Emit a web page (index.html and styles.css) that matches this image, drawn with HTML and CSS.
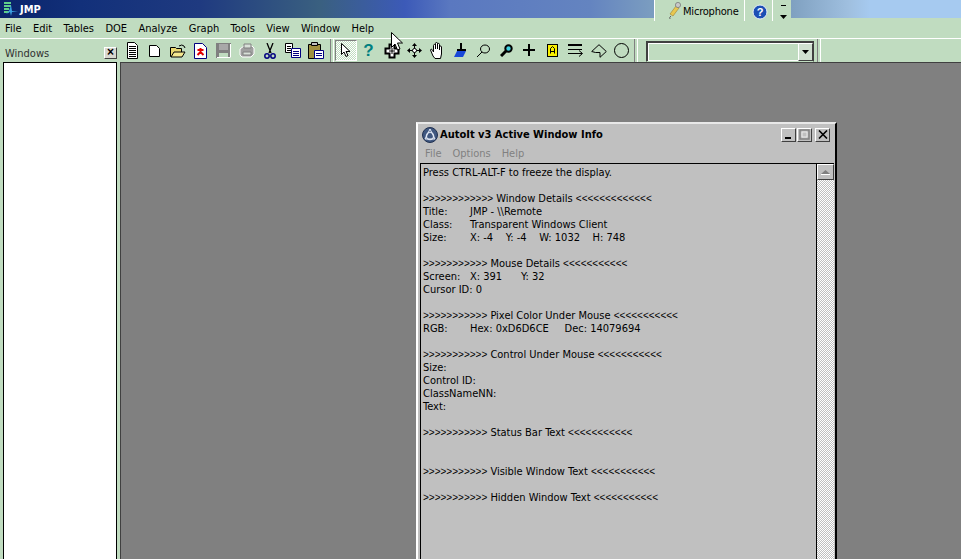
FILE: index.html
```html
<!DOCTYPE html>
<html lang="en">
<head>
<meta charset="utf-8">
<title>JMP</title>
<link rel="stylesheet" href="styles.css">
</head>
<body>
<header class="titlebar">
  <svg class="app-icon" width="16" height="16" viewBox="0 0 16 16"><path d="M1 1h7v2H1zM1 4h7v2H1zM1 7h5v2H1zM1 10h5v2H1z" fill="#5fd08a"/><path d="M3 13l3-3 2-6 1 6h6l-6 1-1 4-1-4z" fill="#39a0e0"/></svg>
  <span class="app-name">JMP</span>
</header>
<div class="langbar">
  <span class="lang-sep"></span>
  <svg class="mic" width="16" height="18" viewBox="0 0 16 18"><path d="M3 13L9 5l3 2-6 8z" fill="#e8c850" stroke="#a08030" stroke-width=".6"/><circle cx="11" cy="4" r="2.600" fill="#c8c8c8" stroke="#707070" stroke-width=".7"/><path d="M4 15q-2 1-1 3" stroke="#606060" fill="none"/></svg>
  <span class="lang-label">Microphone</span>
  <span class="lang-sep"></span>
  <svg class="lang-help" width="16" height="16" viewBox="0 0 16 16"><circle cx="8" cy="8" r="7" fill="#1c4fb4" stroke="#e8f0f8"/><text x="8" y="12" text-anchor="middle" class="help-q">?</text></svg>
  <span class="lang-sep"></span>
  <svg class="lang-more" width="7" height="14" viewBox="0 0 7 14"><path d="M1 0h5v1H1zM0 10h7l-3.500 4z" fill="#000"/></svg>
</div>
<nav class="menubar">
  <span>File</span><span>Edit</span><span>Tables</span><span>DOE</span><span>Analyze</span><span>Graph</span><span>Tools</span><span>View</span><span>Window</span><span>Help</span>
</nav>
<div class="toolbar">
  <div class="panel-head"><span class="panel-title">Windows</span><span class="panel-close">×</span></div>
  <div class="tools tools-a">
    <svg width="12" height="17" viewBox="0 0 12 17"><path d="M1.500.5h7l3 3v13h-10z" fill="#fff" stroke="#000"/><path d="M3 4.500h7M3 6.500h7M3 8.500h7M3 10.500h7M3 12.500h7M3 14.500h7" stroke="#000"/></svg>
    <svg width="13" height="13" viewBox="0 0 13 13"><path d="M1.500 1.500h7l3 3v8h-10z" fill="#fff" stroke="#000"/></svg>
    <svg width="16" height="14" viewBox="0 0 16 14"><path d="M.5 3.500h5l1 1h5v8h-11z" fill="#e8d870" stroke="#000"/><path d="M1 13l3-5h11l-3 5z" fill="#f4e890" stroke="#000"/><path d="M9 2q3-2 5 0l1 2" stroke="#000" fill="none"/></svg>
    <svg width="13" height="16" viewBox="0 0 13 16"><path d="M.5.500h8l4 4v11H.5z" fill="#fff" stroke="#000080"/><path d="M6.500 5v4l-3 3M6.500 9l3 3M3.500 7h6" stroke="#e00000" stroke-width="2" fill="none"/></svg>
    <svg width="15" height="15" viewBox="0 0 15 15"><path d="M0 0h15v15H0z" fill="#808080"/><path d="M3 1h9v6H3z" fill="#a8a8a8"/><path d="M3 10h9v5H3z" fill="#c0dcc0"/><path d="M14.500 1v13.500H1" stroke="#fff" fill="none"/></svg>
    <svg width="16" height="15" viewBox="0 0 16 15"><path d="M1 6l4-3h8l2 2v6l-3 3H3l-2-2z" fill="#a0a0a0" stroke="#fff"/><path d="M5 1h7v4H5zM4 9h8v3H4z" fill="#d8e0d8" stroke="#808080"/></svg>
    <svg width="12" height="16" viewBox="0 0 12 16"><path d="M3 0l4 10M9 0L5 10" stroke="#000" stroke-width="1.300"/><circle cx="3" cy="13" r="2.200" fill="none" stroke="#000080" stroke-width="1.500"/><circle cx="9" cy="13" r="2.200" fill="none" stroke="#000080" stroke-width="1.500"/></svg>
    <svg width="16" height="15" viewBox="0 0 16 15"><path d="M.5.500h7v9h-7z" fill="#fff" stroke="#000"/><path d="M2 3.500h4M2 5.500h4M2 7.500h4" stroke="#000"/><path d="M6.500 5.500h9v9h-9z" fill="#fff" stroke="#000080"/><path d="M8 8.500h6M8 10.500h6M8 12.500h6" stroke="#000080"/></svg>
    <svg width="16" height="17" viewBox="0 0 16 17"><path d="M.5 2.500h12v14H.5z" fill="#a09040" stroke="#000"/><path d="M3.500.5h6v3h-6z" fill="#c0c0c0" stroke="#000"/><path d="M6.500 8.500h9v8h-9z" fill="#fff" stroke="#000080"/><path d="M8 11.500h6M8 13.500h6" stroke="#000080"/></svg>
  </div>
  <span class="tb-sep tb-sep-a"></span>
  <div class="tools tools-b">
    <span class="tool-on"><svg width="10" height="15" viewBox="0 0 10 15"><path d="M.5.500v11l2.500-2.500 2 4.500 2-1-2-4h4z" fill="#fff" stroke="#000"/></svg></span>
    <span class="tool-help">?</span>
    <svg width="16" height="16" viewBox="0 0 16 16"><path d="M5.500 1.500h5v4h4v5h-4v4h-5v-4h-4v-5h4z" fill="#fff" stroke="#000" stroke-width="2"/><path d="M8 5v6M5 8h6" stroke="#000"/></svg>
    <svg width="15" height="15" viewBox="0 0 15 15"><path d="M7.500 0L10 3H5zM7.500 15L10 12H5zM0 7.500L3 5v5zM15 7.500L12 5v5z" fill="#000"/><path d="M7.500 3v9M3 7.500h9" stroke="#000"/><circle cx="7.500" cy="7.500" r="2" fill="#fff" stroke="#000"/></svg>
    <svg width="16" height="17" viewBox="0 0 16 17"><path d="M3 14L.5 8c0-1 1.500-1 2 0l1 2V3.500c0-1.500 2-1.500 2 0V7V1.500c0-1.500 2-1.500 2 0V7V2.500c0-1.500 2-1.500 2 0V8V5c0-1.300 2-1.300 2 0v7l-1 4.500H5z" fill="#fff" stroke="#000"/></svg>
    <svg width="13" height="15" viewBox="0 0 13 15"><path d="M6 0h2v6h4v2H3V6h3z" fill="#000"/><path d="M3 8h9l-3 6H0z" fill="#1848d8"/></svg>
    <svg width="13" height="13" viewBox="0 0 13 13"><ellipse cx="8" cy="5" rx="4.500" ry="4" fill="none" stroke="#000"/><path d="M5 8l-5 5" stroke="#000"/></svg>
    <svg width="13" height="13" viewBox="0 0 13 13"><circle cx="8.500" cy="4.500" r="3.200" fill="#40d0e0" stroke="#000" stroke-width="2"/><path d="M6 7l-5 5" stroke="#000" stroke-width="3"/></svg>
    <svg width="13" height="13" viewBox="0 0 13 13"><path d="M5 0h2v5h5v2H7v5H5V7H0V5h5z" fill="#000"/></svg>
    <svg width="11" height="13" viewBox="0 0 11 13"><path d="M0 0h11v13H0z" fill="#000"/><path d="M1 1h9v11H1z" fill="#f8f000"/><path d="M3.500 9.500v-5l2-2 2 2v5M3.500 7.500h4" fill="none" stroke="#000"/></svg>
    <svg width="15" height="13" viewBox="0 0 15 13"><path d="M0 0h14v2H0zM0 5h14v1H0zM0 9h14v1H0z" fill="#000"/><path d="M11 6.500l3.500 3-3.500 3" fill="none" stroke="#000"/></svg>
    <svg width="16" height="14" viewBox="0 0 16 14"><path d="M.7 7.500L8 .7l7.300 6.800-6.300 5.800V8.500H4.500z" fill="none" stroke="#000"/></svg>
    <svg width="15" height="15" viewBox="0 0 15 15"><circle cx="7.500" cy="7.500" r="7" fill="none" stroke="#000"/></svg>
  </div>
  <span class="tb-sep tb-sep-b"></span>
  <div class="combo"><span class="combo-field"></span><span class="combo-btn"><svg width="7" height="4" viewBox="0 0 7 4"><path d="M0 0h7L3.500 4z" fill="#000"/></svg></span></div>
  <span class="tb-sep tb-sep-c"></span>
</div>
<main class="workspace">
  <aside class="sidebar"><div class="list"></div></aside>
  <section class="desktop">
    <article class="infowin">
      <div class="win-title">
        <svg class="win-icon" width="16" height="16" viewBox="0 0 16 16"><circle cx="8" cy="8" r="7.500" fill="#405880" stroke="#203050"/><circle cx="8" cy="9" r="3.600" fill="none" stroke="#d0d8e8" stroke-width="1.400"/><path d="M8 2L3 12h10z" fill="none" stroke="#e8eef8"/></svg>
        <span class="win-name">AutoIt v3 Active Window Info</span>
        <span class="win-btns">
          <span class="win-btn"><svg width="8" height="8" viewBox="0 0 8 8"><path d="M0 6h6v2H0z" fill="#000"/></svg></span>
          <span class="win-btn"><svg width="11" height="11" viewBox="0 0 11 11"><path d="M1 1h9v9H1z" fill="#c0c0c0" stroke="#808080" stroke-width="1.500"/><path d="M3 3h5v5H3z" fill="none" stroke="#e8e8e8"/></svg></span>
          <span class="win-btn win-btn-close"><svg width="10" height="9" viewBox="0 0 10 9"><path d="M1 .5l8 8M9 .5l-8 8" stroke="#000" stroke-width="1.600"/></svg></span>
        </span>
      </div>
      <div class="win-menu"><span>File</span><span>Options</span><span>Help</span></div>
      <div class="win-body">
<pre class="info">Press CTRL-ALT-F to freeze the display.

<span class="ar">&gt;&gt;&gt;&gt;&gt;&gt;&gt;&gt;&gt;&gt;&gt;&gt;</span> Window Details <span class="ar">&lt;&lt;&lt;&lt;&lt;&lt;&lt;&lt;&lt;&lt;&lt;&lt;&lt;</span>
Title:	JMP - \\Remote
Class:	Transparent Windows Client
Size:	X: -4    Y: -4    W: 1032    H: 748

<span class="ar">&gt;&gt;&gt;&gt;&gt;&gt;&gt;&gt;&gt;&gt;&gt;</span> Mouse Details <span class="ar">&lt;&lt;&lt;&lt;&lt;&lt;&lt;&lt;&lt;&lt;&lt;</span>
Screen:	X: 391      Y: 32
Cursor ID: 0

<span class="ar">&gt;&gt;&gt;&gt;&gt;&gt;&gt;&gt;&gt;&gt;&gt;</span> Pixel Color Under Mouse <span class="ar">&lt;&lt;&lt;&lt;&lt;&lt;&lt;&lt;&lt;&lt;&lt;</span>
RGB:	Hex: 0xD6D6CE     Dec: 14079694

<span class="ar">&gt;&gt;&gt;&gt;&gt;&gt;&gt;&gt;&gt;&gt;&gt;</span> Control Under Mouse <span class="ar">&lt;&lt;&lt;&lt;&lt;&lt;&lt;&lt;&lt;&lt;&lt;</span>
Size:
Control ID:
ClassNameNN:
Text:

<span class="ar">&gt;&gt;&gt;&gt;&gt;&gt;&gt;&gt;&gt;&gt;&gt;</span> Status Bar Text <span class="ar">&lt;&lt;&lt;&lt;&lt;&lt;&lt;&lt;&lt;&lt;&lt;</span>


<span class="ar">&gt;&gt;&gt;&gt;&gt;&gt;&gt;&gt;&gt;&gt;&gt;</span> Visible Window Text <span class="ar">&lt;&lt;&lt;&lt;&lt;&lt;&lt;&lt;&lt;&lt;&lt;</span>

<span class="ar">&gt;&gt;&gt;&gt;&gt;&gt;&gt;&gt;&gt;&gt;&gt;</span> Hidden Window Text <span class="ar">&lt;&lt;&lt;&lt;&lt;&lt;&lt;&lt;&lt;&lt;&lt;</span></pre>
        <div class="scrollbar"><span class="scroll-up"><svg width="9" height="5" viewBox="0 0 9 5"><path d="M4.500 0L9 4H0z" fill="#808080"/><path d="M0 4.500h9" stroke="#fff"/></svg></span></div>
      </div>
    </article>
  </section>
</main>
<svg class="cursor" width="13" height="20" viewBox="0 0 13 20"><path d="M.5.500v15l3.500-3.500 2.500 6 2.500-1-2.500-6h5z" fill="#fff" stroke="#000"/></svg>
</body>
</html>
```
FILE: styles.css
```css
* { box-sizing: border-box; }
html, body { margin: 0; height: 100%; overflow: hidden; }
body {
  width: 961px; height: 559px; position: relative;
  display: flex; flex-direction: column;
  background: #808080; color: #000;
  font: 11px/13px "DejaVu Sans Condensed", "Liberation Sans", sans-serif;
}
.titlebar {
  height: 18px; flex: none; display: flex; align-items: center; padding-left: 3px; gap: 2px;
  background: linear-gradient(90deg, #0a246a 0, #12307a 80px, #1f3a80 200px, #3a6080 320px, #3c5ab8 405px, #5a78c0 450px, #6484c0 590px, #7a9cc0 650px, #7fa0c0 791px, #a0c0e0 850px, #a6caf0 870px);
}
.app-name { color: #fff; font-weight: 700; margin-left: -1px; }
.langbar {
  position: absolute; left: 654px; top: 0; width: 137px; height: 18px;
  background: #c0dcc0; display: flex; align-items: flex-start; padding-top: 3px;
}
.lang-sep { width: 1px; height: 21px; margin-top: -3px; background: #fff; flex: none; }
.mic { margin: -2px 0 0 12px; flex: none; }
.lang-label { margin: 2px 0 0 0; width: 61px; flex: none; white-space: nowrap; letter-spacing: -.2px; }
.lang-help { margin: 1px 4px 0 7px; flex: none; }
.help-q { fill: #fff; font: 700 11px "Liberation Sans", sans-serif; }
.lang-more { margin: 2px 0 0 7px; flex: none; }
.menubar {
  height: 20px; flex: none; background: #c0dcc0; display: flex; align-items: center; padding: 1px 0 0 5px; gap: 11.400px;
}
.toolbar {
  height: 24px; flex: none; background: #c0dcc0; border-top: 1px solid #fff;
  display: flex; align-items: center; position: relative;
}
.panel-head { width: 120px; flex: none; display: flex; align-items: center; justify-content: space-between; padding: 6px 3px 0 5px; }
.panel-title { color: #303030; }
.panel-close {
  width: 13px; height: 12px; margin-top: -2px; background: #d8d8d0; border: 1px solid; border-color: #fff #404040 #404040 #fff;
  font: 700 12px/9px "Liberation Sans", sans-serif; text-align: center;
}
.tools { display: grid; grid-auto-flow: column; grid-auto-columns: 23px; align-items: center; justify-items: center; height: 100%; flex: none; }
.tool-on {
  width: 22px; height: 21px; display: flex; align-items: center; justify-content: center;
  border: 1px solid; border-color: #808080 #fff #fff #808080;
  background: repeating-conic-gradient(#fff 0 25%, #c0dcc0 0 50%) 0 0 / 2px 2px;
}
.tool-help { color: #008080; font: 700 17px/1 "Liberation Sans", sans-serif; }
.tb-sep { width: 4px; height: 23px; flex: none; border-left: 1px solid #808080; border-right: 1px solid #fff; }
.tb-sep-a { margin-left: 3px; }
.tb-sep-b { margin: 0 8px 0 1px; }
.tb-sep-c { margin-left: 3px; }
.combo {
  width: 168px; height: 21px; flex: none; margin-top: 1px; display: flex; background: #c0dcc0;
  border: 1px solid; border-color: #404040 #404040 #c0dcc0 #404040; box-shadow: inset 1px 1px 0 #404040;
}
.combo-field { flex: 1; border: 1px solid #fff; border-right: 0; margin: 1px 0 0 1px; }
.combo-btn {
  width: 15px; display: flex; align-items: center; justify-content: center; background: #d0e0d0;
  border: 1px solid; border-color: #fff #404040 #404040 #fff; margin-top: 1px;
}
.workspace { flex: 1; display: flex; min-height: 0; border-top: 1px solid #404040; }
.sidebar { width: 120px; flex: none; background: #c0dcc0; padding: 0 3px; margin-top: -1px; }
.list { height: 100%; background: #fff; border: 1px solid #000; border-bottom: 0; }
.desktop { flex: 1; position: relative; background: #808080; border-left: 1px solid #404040; overflow: hidden; }
.infowin {
  position: absolute; left: 295px; top: 59px; width: 421px; height: 440px;
  background: #c0c0c0; border: 1px solid; border-width: 2px 2px 0 2px;
  border-color: #e8e8e8 #000 #000 #fff;
  padding: 2px 1px 0 2px; display: flex; flex-direction: column;
}
.win-title { height: 17px; flex: none; display: flex; align-items: center; padding-left: 2px; }
.win-icon { flex: none; }
.win-name { margin-left: 2px; font-weight: 700; }
.win-btns { margin-left: auto; display: flex; padding-right: 4px; }
.win-btn {
  width: 15px; height: 14px; margin-left: 1px; display: flex; align-items: center; justify-content: center;
  background: #c0c0c0; border: 1px solid; border-color: #fff #404040 #404040 #fff;
}
.win-btn-close { margin-left: 3px; }
.win-menu { height: 20px; flex: none; display: flex; align-items: center; padding-left: 5px; gap: 11px; color: #808080; }
.win-body { flex: 1; display: flex; min-height: 0; border-top: 1px solid #000; border-left: 1px solid #000; }
.info {
  flex: 1; margin: 0; padding: 2px 0 0 2px; font: inherit; tab-size: 47px; white-space: pre;
  border-right: 1px solid #000; overflow: hidden;
}
.ar { font-family: "Liberation Sans", sans-serif; font-size: 10px; }
.scrollbar { width: 17px; flex: none; background: repeating-conic-gradient(#fff 0 25%, #c0c0c0 0 50%) 0 0 / 2px 2px; }
.scroll-up {
  display: flex; align-items: center; justify-content: center; height: 16px; background: #c0c0c0;
  border: 1px solid; border-color: #fff #404040 #404040 #fff;
}
.cursor { position: absolute; left: 391px; top: 32px; }
```
